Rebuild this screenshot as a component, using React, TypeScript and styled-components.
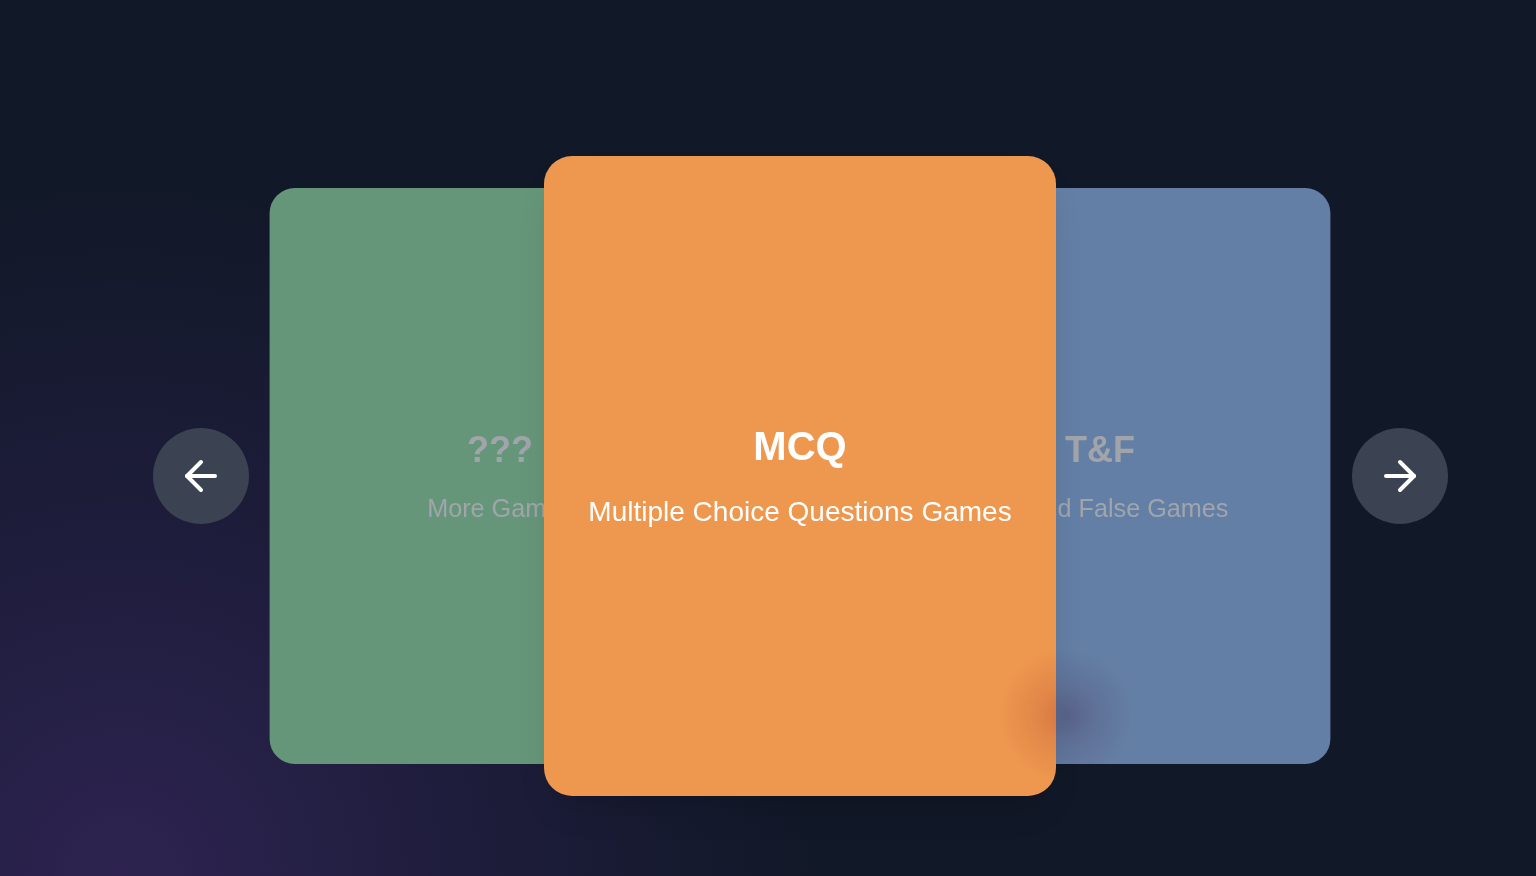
import { useState } from 'react'
import styled, { createGlobalStyle } from 'styled-components'
import { ArrowLeft, ArrowRight } from 'lucide-react'

const GlobalStyle = createGlobalStyle`
  html, body {
    margin: 0;
    padding: 0;
    background: #111827;
  }
  * {
    box-sizing: border-box;
  }
`

type Game = {
  id: string
  title: string
  subtitle: string
  color: string
}

const games: Game[] = [
  { id: 'more', title: '???', subtitle: 'More Games', color: '#66967a' },
  {
    id: 'mcq',
    title: 'MCQ',
    subtitle: 'Multiple Choice Questions Games',
    color: '#ee984f',
  },
  { id: 'tf', title: 'T&F', subtitle: 'True and False Games', color: '#647fa5' },
]

const App = () => {
  const [active, setActive] = useState(1)

  const prev = () => setActive((a) => (a + games.length - 1) % games.length)
  const next = () => setActive((a) => (a + 1) % games.length)

  return (
    <>
      <GlobalStyle />
      <Page>
        <Carousel>
          <NavButton onClick={prev} aria-label="previous">
            <ArrowLeft size={48} strokeWidth={2} />
          </NavButton>
          <Stage>
            {games.map((game, index) => {
              let offset = index - active
              if (offset > 1) offset -= games.length
              if (offset < -1) offset += games.length
              return (
                <Card
                  key={game.id}
                  $color={game.color}
                  $offset={offset}
                  onClick={() => setActive(index)}
                >
                  <Title $active={offset === 0}>{game.title}</Title>
                  <Subtitle $active={offset === 0}>{game.subtitle}</Subtitle>
                </Card>
              )
            })}
            <Glow />
          </Stage>
          <NavButton onClick={next} aria-label="next">
            <ArrowRight size={48} strokeWidth={2} />
          </NavButton>
        </Carousel>
      </Page>
    </>
  )
}

const Page = styled.div`
  min-height: 876px;
  padding: 76px 0 0 64px;
  display: flex;
  align-items: center;
  justify-content: center;
  font-family: 'Liberation Sans', Arial, sans-serif;
  background: radial-gradient(
      circle at 8% 100%,
      rgba(70, 45, 115, 0.55) 0%,
      rgba(55, 38, 100, 0.35) 20%,
      rgba(17, 24, 39, 0) 42%
    ),
    #111827;
  overflow: hidden;
`

const Carousel = styled.div`
  display: flex;
  align-items: center;
`

const NavButton = styled.button`
  width: 96px;
  height: 96px;
  border-radius: 50%;
  border: none;
  background: #3b4252;
  color: #ffffff;
  display: flex;
  align-items: center;
  justify-content: center;
  cursor: pointer;
  padding: 0;
  flex-shrink: 0;
`

const Stage = styled.div`
  position: relative;
  width: 1103px;
  height: 640px;
`

const Card = styled.div<{ $color: string; $offset: number }>`
  position: absolute;
  top: 0;
  left: calc(50% - 256px);
  width: 512px;
  height: 640px;
  border-radius: 28px;
  background: ${({ $color }) => $color};
  display: flex;
  flex-direction: column;
  align-items: center;
  justify-content: center;
  text-align: center;
  white-space: nowrap;
  cursor: pointer;
  z-index: ${({ $offset }) => ($offset === 0 ? 2 : 1)};
  transform: translateX(${({ $offset }) => $offset * 300}px)
    scale(${({ $offset }) => ($offset === 0 ? 1 : 0.9)});
  box-shadow: ${({ $offset }) =>
    $offset === 0 ? '0 20px 40px -16px rgba(0, 0, 0, 0.2)' : 'none'};
`

const Title = styled.div<{ $active: boolean }>`
  font-size: 40px;
  line-height: 44px;
  font-weight: 700;
  color: ${({ $active }) => ($active ? '#ffffff' : '#a1a5ab')};
  margin-bottom: 28px;
`

const Subtitle = styled.div<{ $active: boolean }>`
  font-size: 28px;
  line-height: 32px;
  font-weight: 400;
  color: ${({ $active }) => ($active ? '#ffffff' : '#a1a5ab')};
`

const Glow = styled.div`
  position: absolute;
  left: 747px;
  top: 489px;
  width: 140px;
  height: 140px;
  border-radius: 50%;
  z-index: 3;
  pointer-events: none;
  mix-blend-mode: multiply;
  background: radial-gradient(
    circle,
    rgba(225, 195, 210, 1) 0%,
    rgba(238, 215, 225, 0.7) 30%,
    rgba(255, 255, 255, 0) 70%
  );
`

export default App
